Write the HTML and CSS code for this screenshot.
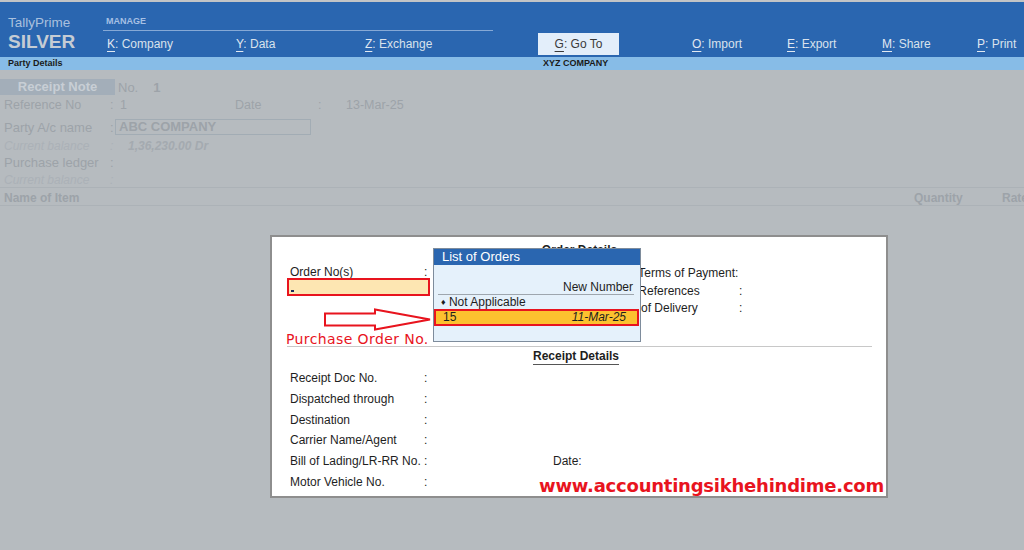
FILE: index.html
```html
<!DOCTYPE html>
<html lang="en">
<head>
    <meta charset="UTF-8">
    <title>TallyPrime - Receipt Note</title>
    <link rel="stylesheet" href="styles.css">
</head>
<body>
    <header class="topbar">
        <div class="brand">
            <div class="brand-name">TallyPrime</div>
            <div class="brand-edition">SILVER</div>
        </div>
        <div class="manage">
            <div class="manage-label">MANAGE</div>
            <nav class="menu">
                <span class="menu-item"><u>K</u>: Company</span>
                <span class="menu-item"><u>Y</u>: Data</span>
                <span class="menu-item"><u>Z</u>: Exchange</span>
            </nav>
        </div>
        <nav class="menu menu-right">
            <span class="menu-item goto"><u>G</u>: Go To</span>
            <span class="menu-item"><u>O</u>: Import</span>
            <span class="menu-item"><u>E</u>: Export</span>
            <span class="menu-item"><u>M</u>: Share</span>
            <span class="menu-item"><u>P</u>: Print</span>
        </nav>
    </header>

    <div class="subbar">
        <span class="subbar-left">Party Details</span>
        <span>XYZ COMPANY</span>
    </div>

    <main class="voucher">
        <div class="row row-head">
            <span class="voucher-type">Receipt Note</span>
            <span class="no-label">No.</span>
            <b>1</b>
        </div>
        <div class="row row-ref">
            <span class="lbl">Reference No</span>
            <span class="colon">:</span>
            <span class="ref-val">1</span>
            <span class="date-lbl">Date</span>
            <span class="colon date-colon">:</span>
            <span>13-Mar-25</span>
        </div>
        <div class="row row-party">
            <span class="lbl">Party A/c name</span>
            <span class="colon">:</span>
            <span class="party-box">ABC COMPANY</span>
        </div>
        <div class="row row-bal">
            <span class="lbl">Current balance</span>
            <span class="colon">:</span>
            <b class="bal-val">1,36,230.00 Dr</b>
        </div>
        <div class="row row-ledger">
            <span class="lbl">Purchase ledger</span>
            <span class="colon">:</span>
        </div>
        <div class="row row-bal">
            <span class="lbl">Current balance</span>
            <span class="colon">:</span>
        </div>
        <div class="items-head">
            <span>Name of Item</span>
            <span>Quantity</span>
            <span>Rate</span>
        </div>
    </main>

    <!-- Order / receipt details sub-form -->
    <div class="dialog">
        <section class="order-section">
            <div class="section-title">Order Details</div>
            <div class="order-cols">
                <div class="order-left">
                    <div class="field"><span>Order No(s)</span><span>:</span></div>
                    <div class="order-input"><span class="cursor"></span></div>
                </div>
                <div class="order-right">
                    <div class="field-r"><span>Mode/Terms of Payment:</span><span></span></div>
                    <div class="field-r"><span>Other References</span><span>:</span></div>
                    <div class="field-r"><span>Terms of Delivery</span><span>:</span></div>
                </div>
            </div>
        </section>
        <section class="receipt-section">
            <div class="section-title"><span class="underlined">Receipt Details</span></div>
            <div class="rfield"><span>Receipt Doc No.</span><span>:</span></div>
            <div class="rfield"><span>Dispatched through</span><span>:</span></div>
            <div class="rfield"><span>Destination</span><span>:</span></div>
            <div class="rfield"><span>Carrier Name/Agent</span><span>:</span></div>
            <div class="rfield"><span>Bill of Lading/LR-RR No.</span><span>:</span><span>Date:</span></div>
            <div class="rfield"><span>Motor Vehicle No.</span><span>:</span></div>
        </section>
    </div>

    <div class="popup">
        <div class="popup-title">List of Orders</div>
        <div class="popup-body">
            <div class="popup-new">New Number</div>
            <div class="popup-na"><span class="diamond">&#9830;</span> Not Applicable</div>
            <div class="popup-sel"><span>15</span><i>11-Mar-25</i></div>
        </div>
    </div>

    <svg class="arrow" width="110" height="24" viewBox="0 0 110 24">
        <polygon points="1,5.5 51,5.5 51,1.5 106,11.5 51,21.5 51,17.5 1,17.5" fill="none" stroke="#e8141e" stroke-width="2"/>
    </svg>
    <div class="note-po">Purchase Order No.</div>
    <div class="note-site">www.accountingsikhehindime.com</div>
</body>
</html>
```

FILE: styles.css
```css
* {
    margin: 0;
    padding: 0;
    box-sizing: border-box;
}

body {
    width: 1024px;
    height: 550px;
    overflow: hidden;
    background: #b6bbbf;
    font-family: "Liberation Sans", Arial, sans-serif;
    font-size: 12px;
    color: #1e1e1e;
}

/* ---------- top bar ---------- */
.topbar {
    display: flex;
    height: 57px;
    border-top: 2px solid #c2c4c6;
    background: #2a66b0;
    color: #d9e2ec;
}

.brand {
    flex-shrink: 0;
    width: 103px;
    padding: 12px 0 0 8px;
}

.brand-name {
    font-size: 13.5px;
    line-height: 17px;
    color: #a9c0de;
}

.brand-edition {
    font-size: 19px;
    font-weight: bold;
    line-height: 22px;
    color: #c5ccd4;
}

.manage {
    flex-shrink: 0;
    width: 390px;
    padding-top: 12px;
}

.manage-label {
    font-size: 9px;
    font-weight: bold;
    line-height: 14px;
    padding: 0 0 2px 3px;
    color: #a6c0e4;
    border-bottom: 1px solid #86a9d6;
}

.menu {
    display: flex;
    padding-top: 3px;
}

.menu-item {
    flex-shrink: 0;
    font-size: 12px;
    line-height: 20px;
    white-space: nowrap;
}

.manage .menu-item {
    width: 129px;
    padding-left: 4px;
}

.menu-item u {
    text-underline-offset: 3px;
    color: #e2e9f2;
}

.menu-right {
    flex-shrink: 0;
    padding-top: 31px;
    margin-left: 45px;
}

.menu-right .menu-item {
    width: 95px;
    line-height: 22px;
}

.menu-right .goto {
    width: 81px;
    height: 22px;
    margin-right: 73px;
    text-align: center;
    background: #e3eefa;
    color: #3a3a3a;
}

.menu-right .goto u {
    color: #3a3a3a;
}

/* ---------- sub bar ---------- */
.subbar {
    display: flex;
    height: 13px;
    background: #87bce7;
    font-size: 9px;
    font-weight: bold;
    line-height: 13px;
    color: #1a1a1a;
}

.subbar-left {
    width: 543px;
    padding-left: 8px;
}

/* ---------- dimmed voucher behind the sub-form ---------- */
.voucher {
    padding-top: 9px;
    color: #9da3a9;
}

.row {
    display: flex;
    align-items: center;
    padding-left: 4px;
}

.lbl {
    width: 106px;
}

.colon {
    width: 10px;
}

.row-head {
    height: 16px;
    padding-left: 0;
    margin-bottom: 1px;
}

.voucher-type {
    width: 115px;
    height: 16px;
    line-height: 16px;
    text-align: center;
    font-size: 13px;
    font-weight: bold;
    background: #a3aeb9;
    color: #c8ced5;
}

.no-label {
    margin: 0 15px 0 3px;
    font-size: 13px;
}

.row-head b {
    font-size: 13px;
}

.row-ref {
    height: 17px;
    font-size: 12.5px;
    margin-bottom: 3px;
}

.ref-val {
    width: 115px;
}

.date-lbl {
    width: 83px;
}

.date-colon {
    width: 28px;
}

.row-party {
    height: 22px;
    font-size: 13px;
}

.party-box {
    width: 196px;
    height: 16px;
    line-height: 14px;
    margin-left: -5px;
    padding-left: 3px;
    border: 1px solid #a2acb4;
    font-weight: bold;
    font-size: 13px;
}

.row-bal {
    height: 14px;
    font-style: italic;
    color: #abb1b7;
    padding-top: 2px;
}

.bal-val {
    margin-left: 8px;
    color: #a4aab0;
}

.row-ledger {
    height: 20px;
    font-size: 13px;
}

.items-head {
    display: grid;
    grid-template-columns: 1fr 88px 22px;
    height: 19px;
    line-height: 20px;
    margin-top: 1px;
    padding-left: 4px;
    overflow: hidden;
    white-space: nowrap;
    font-weight: bold;
    border-top: 1px solid #acb2b7;
    border-bottom: 1px solid #acb2b7;
}

/* ---------- sub-form ---------- */
.dialog {
    position: absolute;
    left: 270px;
    top: 235px;
    width: 618px;
    height: 263px;
    background: #fff;
    border: 2px solid #8e8e8e;
}

.section-title {
    text-align: center;
    font-weight: bold;
    line-height: 14px;
}

.order-section {
    height: 110px;
    margin: 0 14px 0 15px;
    border-bottom: 1px solid #c8c8c8;
}

.order-section .section-title {
    padding: 6px 0 0 0;
}

.order-cols {
    display: flex;
    margin-top: 6px;
}

.order-left {
    width: 318px;
    padding-left: 3px;
}

.field {
    display: grid;
    grid-template-columns: 134px 10px;
    height: 15px;
    line-height: 19px;
}

.order-input {
    position: relative;
    width: 143px;
    height: 18px;
    margin-left: -3px;
    background: #fde6b2;
    border: 2px solid #e8141e;
}

.cursor {
    position: absolute;
    left: 2px;
    bottom: 2px;
    width: 3px;
    height: 2px;
    background: #1a2a5a;
}

.order-right {
    padding-top: 2px;
}

.field-r {
    display: grid;
    grid-template-columns: 134px 10px;
    height: 17.5px;
    line-height: 17.5px;
}

.receipt-section {
    padding-left: 18px;
}

.receipt-section .section-title {
    height: 21px;
    margin-left: -18px;
    padding: 2px 6px 0 0;
}

.underlined {
    display: inline-block;
    border-bottom: 1px solid #555;
    padding-bottom: 1px;
}

.rfield {
    display: grid;
    grid-template-columns: 134px 129px auto;
    height: 20.8px;
    line-height: 20.8px;
}

/* ---------- list of orders popup ---------- */
.popup {
    position: absolute;
    left: 433px;
    top: 248px;
    width: 208px;
    height: 94px;
    background: #e5f1fb;
    border: 1px solid #7e8c9c;
}

.popup-title {
    height: 16px;
    line-height: 16px;
    padding-left: 8px;
    font-size: 13px;
    background: #2a66b0;
    color: #fff;
}

.popup-body {
    padding-top: 15px;
}

.popup-new {
    height: 15px;
    line-height: 15px;
    margin: 0 6px 0 4px;
    padding-right: 1px;
    text-align: right;
    border-bottom: 1px solid #9ea6ae;
}

.popup-na {
    height: 14px;
    line-height: 14px;
    padding-left: 7px;
}

.diamond {
    font-size: 9px;
    vertical-align: 1px;
}

.popup-sel {
    display: flex;
    justify-content: space-between;
    height: 17px;
    line-height: 13px;
    margin: 0 1px 0 0;
    padding: 0 11px 0 7px;
    background: #fcc12f;
    border: 2px solid #e8141e;
}

/* ---------- annotations ---------- */
.arrow {
    position: absolute;
    left: 324px;
    top: 308px;
}

.note-po {
    position: absolute;
    left: 286px;
    top: 331px;
    font-family: "DejaVu Sans", Verdana, sans-serif;
    font-size: 14px;
    letter-spacing: 0.4px;
    line-height: 16px;
    color: #e8141e;
}

.note-site {
    position: absolute;
    right: 140px;
    top: 475px;
    font-family: "DejaVu Sans", Verdana, sans-serif;
    font-weight: bold;
    font-size: 18px;
    letter-spacing: -0.23px;
    line-height: 22px;
    color: #e8141e;
}
```
